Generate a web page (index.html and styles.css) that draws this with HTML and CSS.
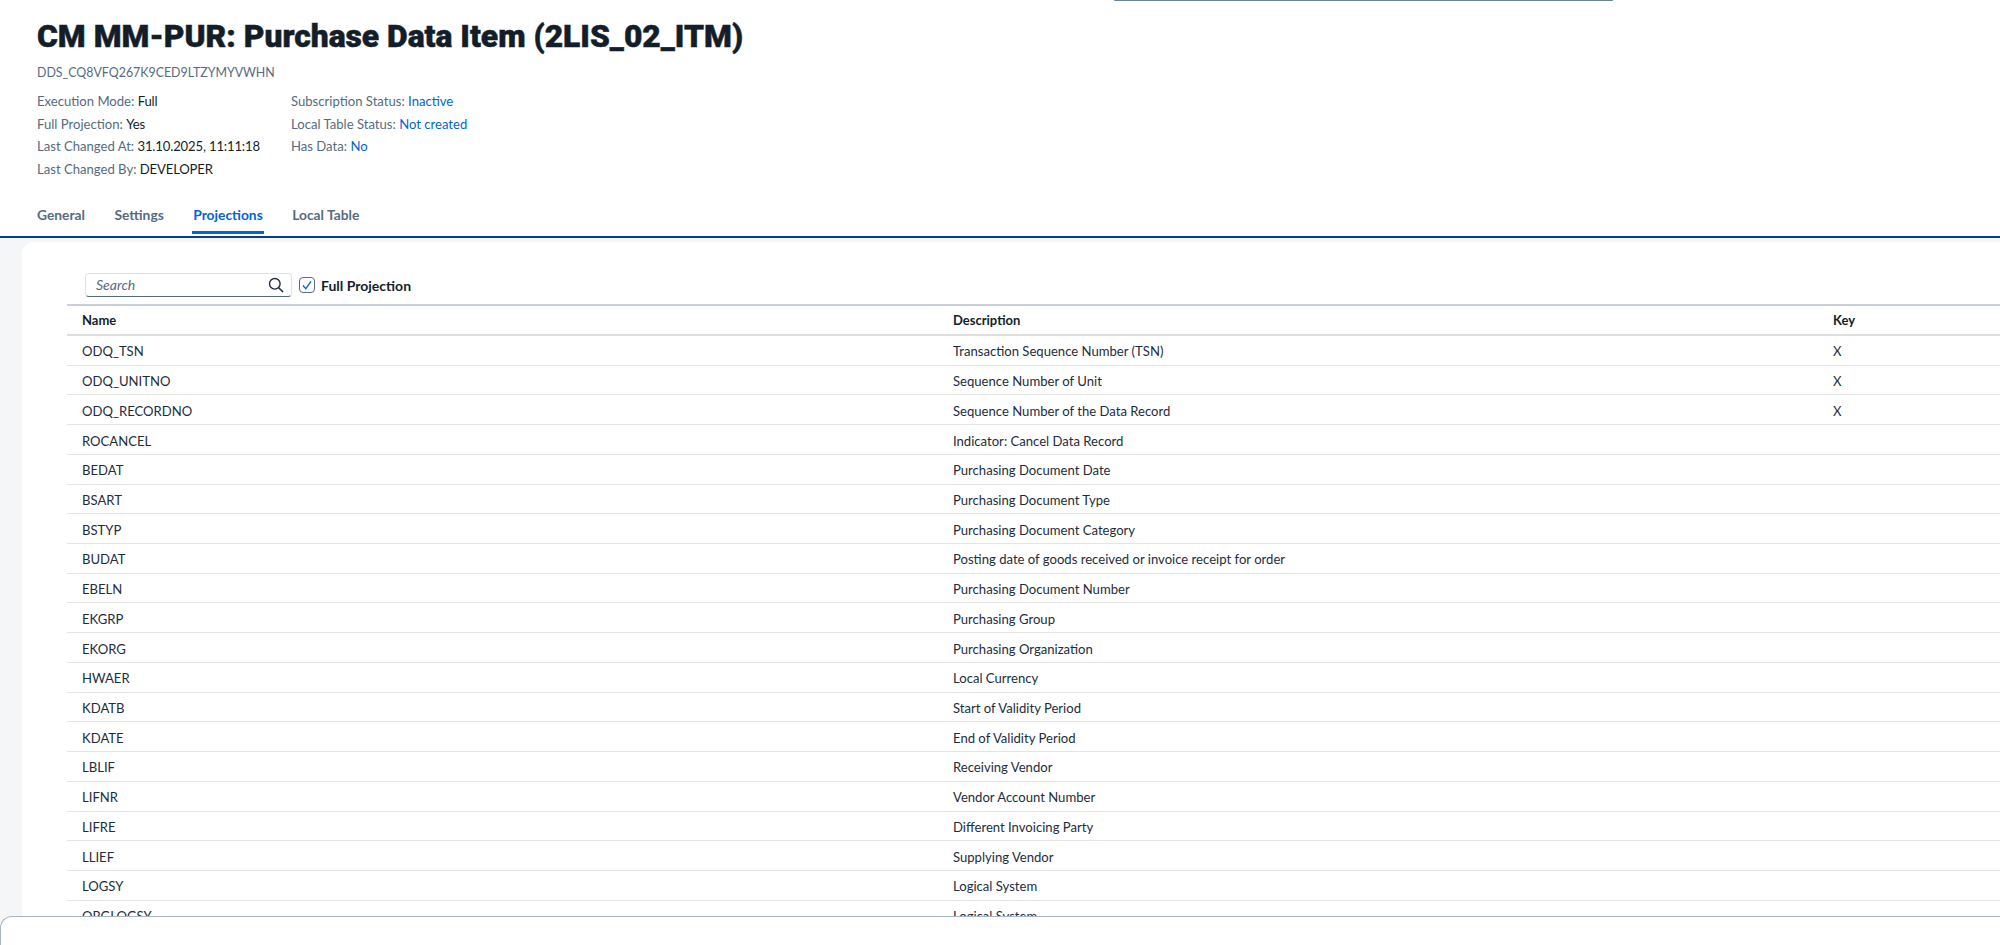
FILE: index.html
```html
<!DOCTYPE html>
<html lang="en">
<head>
<meta charset="utf-8">
<title>CM MM-PUR: Purchase Data Item (2LIS_02_ITM)</title>
<link rel="stylesheet" href="styles.css">
</head>
<body>
<div class="top-handle"></div>
<header class="head">
  <h1 class="title">CM MM-PUR: Purchase Data Item (2LIS_02_ITM)</h1>
  <div class="subtitle">DDS_CQ8VFQ267K9CED9LTZYMYVWHN</div>
  <div class="meta">
    <div class="meta-col">
      <div class="meta-row">Execution Mode: <span class="val">Full</span></div>
      <div class="meta-row">Full Projection: <span class="val">Yes</span></div>
      <div class="meta-row">Last Changed At: <span class="val">31.10.2025, 11:11:18</span></div>
      <div class="meta-row">Last Changed By: <span class="val">DEVELOPER</span></div>
    </div>
    <div class="meta-col">
      <div class="meta-row">Subscription Status: <span class="link">Inactive</span></div>
      <div class="meta-row">Local Table Status: <span class="link">Not created</span></div>
      <div class="meta-row">Has Data: <span class="link">No</span></div>
    </div>
  </div>
  <nav class="tabs">
    <span class="tab">General</span>
    <span class="tab">Settings</span>
    <span class="tab active">Projections</span>
    <span class="tab">Local Table</span>
  </nav>
</header>
<main class="content">
  <section class="card">
    <div class="toolbar">
      <div class="search">
        <span class="search-text">Search</span>
        <svg class="search-icon" width="16" height="16" viewBox="0 0 16 16"><circle cx="6.8" cy="6.8" r="5.3" fill="none" stroke="#1d2d3e" stroke-width="1.4"/><path d="M10.7 10.7 15 15" stroke="#1d2d3e" stroke-width="1.6" fill="none"/></svg>
      </div>
      <span class="check"><svg width="12" height="12" viewBox="0 0 12 12"><path d="M2 6.5 4.8 9.6 10 2.4" fill="none" stroke="#0064d9" stroke-width="1.3"/></svg></span>
      <span class="check-label">Full Projection</span>
    </div>
    <div class="table">
      <div class="row header"><span>Name</span><span>Description</span><span>Key</span></div>
      <div class="row"><span>ODQ_TSN</span><span>Transaction Sequence Number (TSN)</span><span>X</span></div>
      <div class="row"><span>ODQ_UNITNO</span><span>Sequence Number of Unit</span><span>X</span></div>
      <div class="row"><span>ODQ_RECORDNO</span><span>Sequence Number of the Data Record</span><span>X</span></div>
      <div class="row"><span>ROCANCEL</span><span>Indicator: Cancel Data Record</span><span></span></div>
      <div class="row"><span>BEDAT</span><span>Purchasing Document Date</span><span></span></div>
      <div class="row"><span>BSART</span><span>Purchasing Document Type</span><span></span></div>
      <div class="row"><span>BSTYP</span><span>Purchasing Document Category</span><span></span></div>
      <div class="row"><span>BUDAT</span><span>Posting date of goods received or invoice receipt for order</span><span></span></div>
      <div class="row"><span>EBELN</span><span>Purchasing Document Number</span><span></span></div>
      <div class="row"><span>EKGRP</span><span>Purchasing Group</span><span></span></div>
      <div class="row"><span>EKORG</span><span>Purchasing Organization</span><span></span></div>
      <div class="row"><span>HWAER</span><span>Local Currency</span><span></span></div>
      <div class="row"><span>KDATB</span><span>Start of Validity Period</span><span></span></div>
      <div class="row"><span>KDATE</span><span>End of Validity Period</span><span></span></div>
      <div class="row"><span>LBLIF</span><span>Receiving Vendor</span><span></span></div>
      <div class="row"><span>LIFNR</span><span>Vendor Account Number</span><span></span></div>
      <div class="row"><span>LIFRE</span><span>Different Invoicing Party</span><span></span></div>
      <div class="row"><span>LLIEF</span><span>Supplying Vendor</span><span></span></div>
      <div class="row"><span>LOGSY</span><span>Logical System</span><span></span></div>
      <div class="row"><span>ORGLOGSY</span><span>Logical System</span><span></span></div>
    </div>
  </section>
</main>
<div class="bottom-sheet"></div>
</body>
</html>
```
FILE: styles.css
```css
* { box-sizing: border-box; }
html, body { margin: 0; height: 945px; overflow: hidden; }
body {
  font-family: "Lato", "Liberation Sans", sans-serif;
  font-size: 13.1px;
  color: #1d2d3e;
  background: #fff;
  display: flex;
  flex-direction: column;
}
.top-handle {
  position: absolute;
  top: 0;
  left: 1114px;
  width: 499px;
  height: 1px;
  background: #6d8196;
  border-radius: 0 0 2px 2px;
}
.head {
  height: 238px;
  flex: none;
  padding: 16px 0 0 37px;
  border-bottom: 2px solid #0a3d8f;
  display: flex;
  flex-direction: column;
}
.title {
  margin: 0;
  font-family: "Roboto", sans-serif;
  font-size: 31.8px;
  line-height: 40px;
  font-weight: 900;
  color: #131e29;
  -webkit-text-stroke: 0.5px #131e29;
}
.subtitle {
  margin-top: 9px;
  line-height: 16px;
  font-size: 12.4px;
  color: #556b82;
}
.meta {
  display: flex;
  margin-top: 9px;
}
.meta-col { width: 254px; }
.meta-row {
  height: 22.5px;
  line-height: 22.5px;
  color: #556b82;
  white-space: nowrap;
}
.val { color: #131e29; letter-spacing: -0.15px; }
.link { color: #0064d9; }
.tabs {
  display: flex;
  gap: 29.5px;
  margin-top: 23px;
}
.tab {
  height: 31px;
  line-height: 24px;
  font-size: 13.8px;
  font-weight: 700;
  color: #556b82;
}
.tab.active {
  color: #0064d9;
  border-bottom: 3px solid #0064d9;
  border-radius: 2px 2px 0 0;
  margin: 0 -1px;
  padding: 0 1px;
}
.content {
  flex: 1;
  min-height: 0;
  background: #f5f6f7;
  padding: 4px 0 0 22px;
}
.card {
  height: 100%;
  background: #fff;
  border-top-left-radius: 12px;
  padding: 27px 0 0 45px;
}
.toolbar {
  display: flex;
  align-items: center;
  height: 35px;
  padding: 0 0 3px 18px;
}
.search {
  width: 207px;
  height: 24px;
  display: flex;
  align-items: center;
  justify-content: space-between;
  padding: 0 7px 0 10px;
  border: 1px solid #dfe3e8;
  border-bottom: 1px solid #556b82;
  border-radius: 4px;
}
.search-text {
  font-size: 14px;
  line-height: 20px;
  font-style: italic;
  color: #556b82;
}
.check {
  width: 16px;
  height: 16px;
  margin-left: 7px;
  border: 1px solid #556b82;
  border-radius: 4px;
  display: flex;
  align-items: center;
  justify-content: center;
}
.check-label {
  margin-left: 6px;
  font-size: 14px;
  font-weight: 700;
  color: #131e29;
}
.table { border-top: 2px solid #c9d0d9; }
.row {
  display: grid;
  grid-template-columns: 871px 880px 1fr;
  height: 29.72px;
  padding-top: 2px;
  align-items: center;
  border-bottom: 1px solid #e5e5e5;
  white-space: nowrap;
}
.row > span { padding-left: 15px; }
.header {
  height: 30px;
  padding-top: 0;
  font-size: 13px;
  font-weight: 700;
  color: #131e29;
  border-bottom: 2px solid #dedede;
}
.bottom-sheet {
  position: absolute;
  left: 0;
  right: 0;
  top: 916px;
  bottom: 0;
  background: #fff;
  border-top: 1px solid #a9b4c6;
  border-left: 1px solid #a9b4c6;
  border-top-left-radius: 12px;
}
```
